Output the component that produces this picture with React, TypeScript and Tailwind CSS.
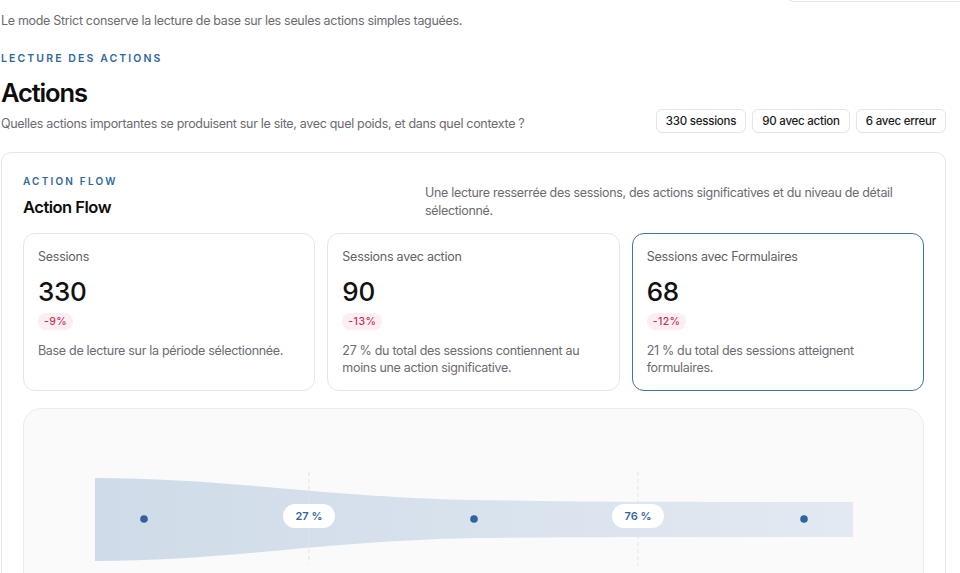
import React from "react";

const font = { fontFamily: "Inter, 'Noto Sans', sans-serif" };

type Stat = {
  label: string;
  value: string;
  delta: string;
  text: string;
  active?: boolean;
};

const stats: Stat[] = [
  {
    label: "Sessions",
    value: "330",
    delta: "-9%",
    text: "Base de lecture sur la période sélectionnée.",
  },
  {
    label: "Sessions avec action",
    value: "90",
    delta: "-13%",
    text: "27 % du total des sessions contiennent au moins une action significative.",
  },
  {
    label: "Sessions avec Formulaires",
    value: "68",
    delta: "-12%",
    text: "21 % du total des sessions atteignent formulaires.",
    active: true,
  },
];

function StatCard({ s }: { s: Stat }) {
  return (
    <div
      className={`h-[158px] rounded-[12px] border bg-white px-[14px] pt-[14px] ${
        s.active ? "border-[#3f72a6]" : "border-[#e6e6e6]"
      }`}
    >
      <div className="text-[12.5px] leading-[18px] tracking-[-0.02em] text-[#5f5f64]">{s.label}</div>
      <div className="mt-[11px] text-[26px] font-medium leading-[30px] tracking-[-0.01em] text-[#111]">
        {s.value}
      </div>
      <div className="mt-[6px] flex">
        <span className="rounded-[8px] bg-[#fdeef2] px-[6px] text-[10.5px] font-medium leading-[17px] tracking-[0.04em] text-[#c2335c]">
          {s.delta}
        </span>
      </div>
      <p className="mt-[12px] text-[12.5px] leading-[17px] tracking-[-0.025em] text-[#6b6b70]">{s.text}</p>
    </div>
  );
}

function FlowChart() {
  return (
    <svg width="900" height="170" viewBox="0 0 900 170" className="block">
      <defs>
        <linearGradient id="band" x1="0" x2="1" y1="0" y2="0">
          <stop offset="0" stopColor="#cfdbe8" />
          <stop offset="1" stopColor="#e2e9f2" />
        </linearGradient>
      </defs>
      <path
        d="M71,69 C200,69 300,88 450,91 C560,93 600,93 829,93 L829,128 C600,128 560,128 450,129 C300,132 200,152 71,152 Z"
        fill="url(#band)"
      />
      <line x1="285" y1="63" x2="285" y2="155" stroke="#e3e3e3" strokeDasharray="4 3" />
      <line x1="614" y1="63" x2="614" y2="157" stroke="#e3e3e3" strokeDasharray="4 3" />
      <circle cx="120" cy="110" r="3.8" fill="#2d64a0" />
      <circle cx="450" cy="110" r="3.8" fill="#2d64a0" />
      <circle cx="780" cy="110" r="3.8" fill="#2d64a0" />
      <rect x="259" y="95" width="52" height="24" rx="12" fill="#fff" />
      <text x="285" y="111" textAnchor="middle" fontSize="11" fontWeight="600" fill="#35659a" style={font}>
        27 %
      </text>
      <rect x="588" y="95" width="52" height="24" rx="12" fill="#fff" />
      <text x="614" y="111" textAnchor="middle" fontSize="11" fontWeight="600" fill="#35659a" style={font}>
        76 %
      </text>
    </svg>
  );
}

export default function App() {
  return (
    <div className="h-[573px] w-[960px] overflow-hidden bg-white pl-[1px] pr-[14px]" style={font}>
      {/* edge of the panel above */}
      <div className="-mr-[14px] flex h-0 justify-end">
        <div className="h-[40px] w-[175px] -translate-y-[38px] rounded-bl-[10px] border border-r-0 border-[#e4e4e4] bg-white" />
      </div>

      <p className="pt-[12px] text-[12.5px] leading-[18px] tracking-[-0.025em] text-[#6b6b70]">
        Le mode Strict conserve la lecture de base sur les seules actions simples taguées.
      </p>

      <div className="mt-[22px] text-[10.5px] font-semibold leading-[14px] tracking-[0.2em] text-[#2e679d]">
        LECTURE DES ACTIONS
      </div>

      <h1 className="mt-[12px] text-[25.5px] font-semibold leading-[30px] tracking-[-0.045em] text-[#0d0d0d]">
        Actions
      </h1>

      <div className="mt-[1px] flex items-end justify-between">
        <p className="pb-[1px] text-[12.5px] leading-[18px] tracking-[-0.025em] text-[#6b6b70]">
          Quelles actions importantes se produisent sur le site, avec quel poids, et dans quel contexte ?
        </p>
        <div className="mb-[1px] flex gap-[6px]">
          {["330 sessions", "90 avec action", "6 avec erreur"].map((b) => (
            <span
              key={b}
              className="h-[24px] rounded-[6px] border border-[#e4e4e4] bg-white px-[9px] text-[11.5px] font-medium leading-[22px] tracking-[-0.02em] text-[#1a1a1a]"
            >
              {b}
            </span>
          ))}
        </div>
      </div>

      <section className="mt-[18px] rounded-[10px] border border-[#e6e6e6] bg-white px-[21px] pt-[21px]">
        <div className="flex justify-between">
          <div>
            <div className="text-[10px] font-semibold leading-[14px] tracking-[0.22em] text-[#2e679d]">
              ACTION FLOW
            </div>
            <h2 className="mt-[8px] text-[16.5px] font-semibold leading-[22px] tracking-[-0.03em] text-[#0d0d0d]">
              Action Flow
            </h2>
          </div>
          <p className="mt-[10px] w-[499px] text-[12.5px] leading-[18px] tracking-[-0.025em] text-[#6b6b70]">
            Une lecture resserrée des sessions, des actions significatives et du niveau de détail sélectionné.
          </p>
        </div>

        <div className="mt-[13px] grid grid-cols-3 gap-[12px]">
          {stats.map((s) => (
            <StatCard key={s.label} s={s} />
          ))}
        </div>

        <div className="mt-[17px] h-[200px] overflow-hidden rounded-[18px] border border-[#ececec] bg-[#fafafa]">
          <FlowChart />
        </div>
      </section>
    </div>
  );
}
